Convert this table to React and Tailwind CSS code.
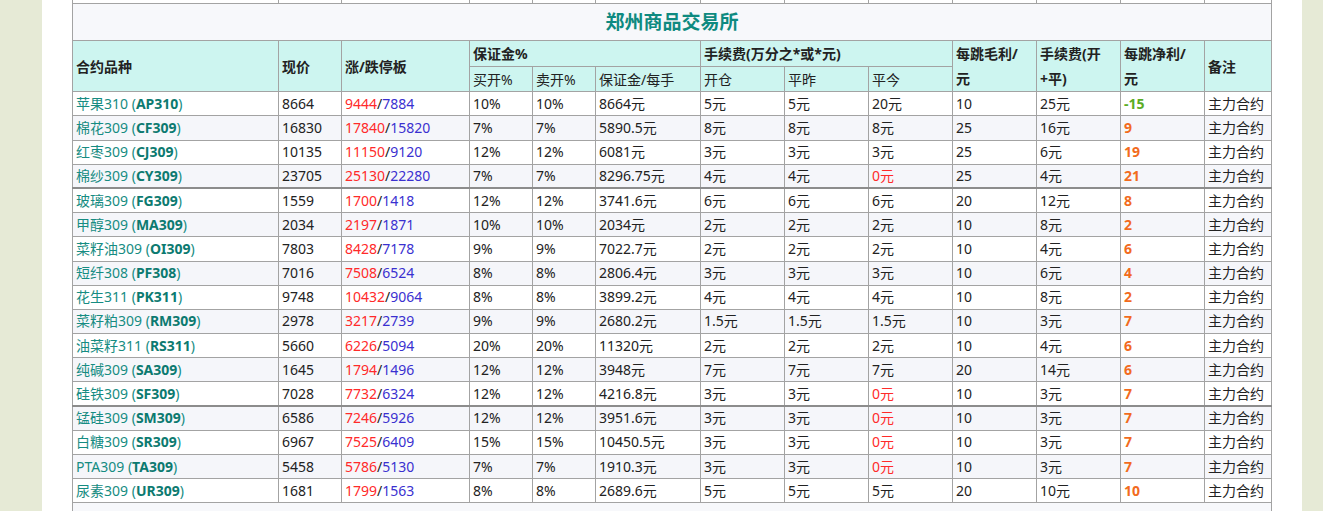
import React from 'react';

const rows = [
  ['苹果310', 'AP310', '8664', '9444', '7884', '10%', '10%', '8664元', '5元', '5元', '20元', '10', '25元', '-15'],
  ['棉花309', 'CF309', '16830', '17840', '15820', '7%', '7%', '5890.5元', '8元', '8元', '8元', '25', '16元', '9'],
  ['红枣309', 'CJ309', '10135', '11150', '9120', '12%', '12%', '6081元', '3元', '3元', '3元', '25', '6元', '19'],
  ['棉纱309', 'CY309', '23705', '25130', '22280', '7%', '7%', '8296.75元', '4元', '4元', '0元', '25', '4元', '21'],
  ['玻璃309', 'FG309', '1559', '1700', '1418', '12%', '12%', '3741.6元', '6元', '6元', '6元', '20', '12元', '8'],
  ['甲醇309', 'MA309', '2034', '2197', '1871', '10%', '10%', '2034元', '2元', '2元', '2元', '10', '8元', '2'],
  ['菜籽油309', 'OI309', '7803', '8428', '7178', '9%', '9%', '7022.7元', '2元', '2元', '2元', '10', '4元', '6'],
  ['短纤308', 'PF308', '7016', '7508', '6524', '8%', '8%', '2806.4元', '3元', '3元', '3元', '10', '6元', '4'],
  ['花生311', 'PK311', '9748', '10432', '9064', '8%', '8%', '3899.2元', '4元', '4元', '4元', '10', '8元', '2'],
  ['菜籽粕309', 'RM309', '2978', '3217', '2739', '9%', '9%', '2680.2元', '1.5元', '1.5元', '1.5元', '10', '3元', '7'],
  ['油菜籽311', 'RS311', '5660', '6226', '5094', '20%', '20%', '11320元', '2元', '2元', '2元', '10', '4元', '6'],
  ['纯碱309', 'SA309', '1645', '1794', '1496', '12%', '12%', '3948元', '7元', '7元', '7元', '20', '14元', '6'],
  ['硅铁309', 'SF309', '7028', '7732', '6324', '12%', '12%', '4216.8元', '3元', '3元', '0元', '10', '3元', '7'],
  ['锰硅309', 'SM309', '6586', '7246', '5926', '12%', '12%', '3951.6元', '3元', '3元', '0元', '10', '3元', '7'],
  ['白糖309', 'SR309', '6967', '7525', '6409', '15%', '15%', '10450.5元', '3元', '3元', '0元', '10', '3元', '7'],
  ['PTA309', 'TA309', '5458', '5786', '5130', '7%', '7%', '1910.3元', '3元', '3元', '0元', '10', '3元', '7'],
  ['尿素309', 'UR309', '1681', '1799', '1563', '8%', '8%', '2689.6元', '5元', '5元', '5元', '20', '10元', '10'],
];

const groupStart = ['FG309', 'SM309'];
const widths = [206, 63, 128, 63, 63, 105, 84, 84, 84, 84, 84, 84, 67];

const td = 'border border-[#a3a3a3] px-[3px] h-[24.2px] leading-[20px] align-middle whitespace-nowrap';
const th = 'border border-[#a3a3a3] px-[3px] text-left align-middle font-bold bg-[#cdf5f0]';
const sub = 'border border-[#a3a3a3] px-[3px] h-[25px] text-left align-middle font-normal bg-[#cdf5f0]';

const Fee = ({ v }) => (
  <span className={v === '0元' ? 'text-[#ff2a2a]' : ''}>{v}</span>
);

export default function App() {
  return (
    <div
      className="min-h-screen bg-[#e6ead6] flex justify-start pl-[42px]"
      style={{ fontFamily: '"Noto Sans", "Noto Sans CJK SC", sans-serif' }}
    >
      <div className="w-[1260px] bg-white pl-[30px] pr-[31px] overflow-hidden h-[511px]">
        <table className="table-fixed border-collapse w-[1199px] -mt-[21px] text-[14px] text-[#222]">
          <colgroup>
            {widths.map((w, i) => (
              <col key={i} style={{ width: w }} />
            ))}
          </colgroup>
          <tbody>
            <tr>
              {widths.map((w, i) => (
                <td key={i} className={td}></td>
              ))}
            </tr>
            <tr>
              <td colSpan={13} className="border border-[#a3a3a3] h-[37px] bg-[#f7f8fb] text-center text-[19px] font-bold text-[#0e8a80]">
                郑州商品交易所
              </td>
            </tr>
            <tr>
              <th rowSpan={2} className={th}>合约品种</th>
              <th rowSpan={2} className={th}>现价</th>
              <th rowSpan={2} className={th}>涨/跌停板</th>
              <th colSpan={3} className={th + ' h-[26px]'}>保证金%</th>
              <th colSpan={3} className={th}>手续费(万分之*或*元)</th>
              <th rowSpan={2} className={th + ' leading-[25px]'}>每跳毛利/<br />元</th>
              <th rowSpan={2} className={th + ' leading-[25px]'}>手续费(开<br />+平)</th>
              <th rowSpan={2} className={th + ' leading-[25px]'}>每跳净利/<br />元</th>
              <th rowSpan={2} className={th}>备注</th>
            </tr>
            <tr>
              <th className={sub}>买开%</th>
              <th className={sub}>卖开%</th>
              <th className={sub}>保证金/每手</th>
              <th className={sub}>开仓</th>
              <th className={sub}>平昨</th>
              <th className={sub}>平今</th>
            </tr>
            {rows.map((r, i) => {
              const heavy = groupStart.includes(r[1]);
              const bg = i % 2 === 1 ? 'bg-[#f5f6fa]' : 'bg-white';
              const cell = td + (heavy ? ' border-t-2 border-t-[#8c8c8c]' : '');
              const net = Number(r[13]);
              return (
                <tr key={r[1]} className={bg}>
                  <td className={cell}>
                    <span className="text-[#168c82]">{r[0]} (</span>
                    <span className="font-bold text-[#0c7a70]">{r[1]}</span>
                    <span className="text-[#168c82]">)</span>
                  </td>
                  <td className={cell}>{r[2]}</td>
                  <td className={cell}>
                    <span className="text-[#ff2a2a]">{r[3]}</span>/<span className="text-[#3a30d0]">{r[4]}</span>
                  </td>
                  <td className={cell}>{r[5]}</td>
                  <td className={cell}>{r[6]}</td>
                  <td className={cell}>{r[7]}</td>
                  <td className={cell}><Fee v={r[8]} /></td>
                  <td className={cell}><Fee v={r[9]} /></td>
                  <td className={cell}><Fee v={r[10]} /></td>
                  <td className={cell}>{r[11]}</td>
                  <td className={cell}>{r[12]}</td>
                  <td className={cell + ' font-bold ' + (net < 0 ? 'text-[#5aac24]' : 'text-[#f26b1d]')}>{r[13]}</td>
                  <td className={cell}>主力合约</td>
                </tr>
              );
            })}
            <tr>
              <td colSpan={13} className="border border-[#a3a3a3] h-[30px] bg-[#f7f8fb]"></td>
            </tr>
          </tbody>
        </table>
      </div>
    </div>
  );
}
